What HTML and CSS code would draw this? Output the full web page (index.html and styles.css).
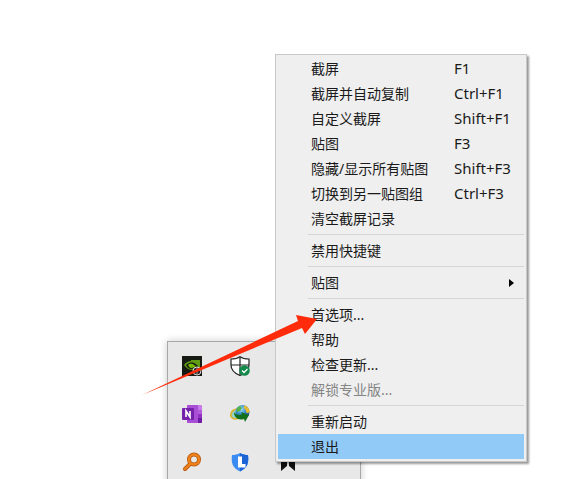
FILE: index.html
```html
<!DOCTYPE html>
<html lang="zh-CN">
<head>
    <meta charset="UTF-8">
    <meta name="viewport" content="width=device-width, initial-scale=1.0">
    <title>托盘菜单</title>
    <link rel="stylesheet" href="styles.css">
</head>
<body>
    <div class="desktop">
        <!-- tray icons -->
        <div class="tray">
            <button class="tray-btn" aria-label="NVIDIA">
                <svg width="20" height="20" viewBox="0 0 20 20">
                    <rect width="20" height="20" fill="#161a12"/>
                    <path d="M2 9C4 6 7 5 9 5V4h9v10h-7c-4 0-7-2-9-5z" fill="#5f9c12"/>
                    <path d="M4 9c2-2 5-3 8-2 2 1 3 2 4 3-2 2-4 3-7 3-2 0-4-2-5-4z" fill="#161a12"/>
                    <path d="M6 9c1-1 4-2 6 0l2 1c-1 1-3 2-5 2-1 0-2-1-3-3z" fill="#76b900"/>
                    <circle cx="15" cy="15" r="4" fill="#222" stroke="#ddd"/>
                    <path d="M15 12.500v3M15 16.500v1" stroke="#fff" stroke-width="1.200"/>
                </svg>
            </button>
            <button class="tray-btn" aria-label="安全中心">
                <svg width="20" height="20" viewBox="0 0 20 20">
                    <path d="M10 .7C7.500 2.500 4.500 3 1 3v6c0 5 4 8.500 9 10.500 5-2 9-5.500 9-10.500V3c-3.500 0-6.500-.5-9-2.300z" fill="#fff" stroke="#222" stroke-width="1.200"/>
                    <path d="M10 1v18M1 9h18" stroke="#222" stroke-width="1.200"/>
                    <circle cx="14.500" cy="14.500" r="5.300" fill="#13894b"/>
                    <path d="M12 14.500l2 2 3.500-3.500" fill="none" stroke="#fff" stroke-width="1.300"/>
                </svg>
            </button>
            <span></span>
            <button class="tray-btn" aria-label="OneNote">
                <svg width="20" height="20" viewBox="0 0 20 20">
                    <rect x="5" y="1" width="15" height="18" rx="1" fill="#c87be8"/>
                    <rect x="5" y="1" width="11" height="18" rx="1" fill="#a94fd6"/>
                    <path d="M16 6h4v4h-4z" fill="#b25bdb"/>
                    <path d="M16 10h4v4h-4z" fill="#9132c2"/>
                    <path d="M16 14h4v4a1 1 0 0 1-1 1h-3z" fill="#6c1ca2"/>
                    <rect y="4" width="12" height="12" rx="1" fill="#7522ab"/>
                    <path d="M4 13V7l4 6V7" fill="none" stroke="#fff" stroke-width="1.600"/>
                </svg>
            </button>
            <button class="tray-btn" aria-label="下载器">
                <svg width="20" height="20" viewBox="0 0 20 20">
                    <defs>
                        <radialGradient id="globe" cx="40%" cy="30%" r="70%">
                            <stop offset="0" stop-color="#a9e0f5"/>
                            <stop offset=".5" stop-color="#368cc9"/>
                            <stop offset="1" stop-color="#164887"/>
                        </radialGradient>
                    </defs>
                    <ellipse cx="6" cy="10" rx="5.500" ry="4.500" transform="rotate(-40 6 10)" fill="#8ed4cb" stroke="#d9b535" stroke-width="1.800"/>
                    <circle cx="12.500" cy="8" r="7" fill="url(#globe)"/>
                    <path d="M14 1.500c3.500.5 5.500 3.500 5.500 6.500-1.500 2-3.500 1-3.500-1s-3-2.500-2-5.500z" fill="#e6bd31"/>
                    <path d="M7 4l3-2 2 2-2 3-3 1z" fill="#55b542"/>
                    <path d="M4 8c2 3 5 4 8 2l-1-2 8 3-4 7-1-3C8 17 4 13 4 8z" fill="#126f1c"/>
                </svg>
            </button>
            <span></span>
            <button class="tray-btn" aria-label="搜索">
                <svg width="20" height="20" viewBox="0 0 20 20">
                    <path d="M8.500 11.500L3 17" stroke="#b8560a" stroke-width="4" stroke-linecap="round"/>
                    <circle cx="12" cy="7.500" r="5" fill="#e8e8e8" stroke="#b8560a" stroke-width="4"/>
                    <circle cx="12" cy="7.500" r="5" fill="none" stroke="#ee821d" stroke-width="2.400"/>
                    <path d="M8.500 11.500L3 17" stroke="#ee821d" stroke-width="2.400" stroke-linecap="round"/>
                </svg>
            </button>
            <button class="tray-btn" aria-label="电脑管家">
                <svg width="20" height="20" viewBox="0 0 20 20">
                    <path d="M10 1C7.500 2.500 4.500 3 2 3c-1 8 .5 13 8 16.500C17.500 16 19 11 18 3c-2.500 0-5.500-.5-8-2z" fill="#3b8bf2"/>
                    <path d="M10 1c2.500 1.500 5.500 2 8 2 1 8-.5 13-8 16.500z" fill="#1c63d6"/>
                    <path d="M8 4.500h4V12h3.500v3.500H8z" fill="#fff"/>
                </svg>
            </button>
            <button class="tray-btn" aria-label="书签">
                <svg width="20" height="20" viewBox="0 0 20 20">
                    <path d="M3 0h6v14l-6 5zM11 0h6v19l-6-5z" fill="#111"/>
                </svg>
            </button>
        </div>

        <!-- context menu -->
        <div class="menu">
            <button class="item"><span>截屏</span><span class="key">F1</span></button>
            <button class="item"><span>截屏并自动复制</span><span class="key">Ctrl+F1</span></button>
            <button class="item"><span>自定义截屏</span><span class="key">Shift+F1</span></button>
            <button class="item"><span>贴图</span><span class="key">F3</span></button>
            <button class="item"><span>隐藏/显示所有贴图</span><span class="key">Shift+F3</span></button>
            <button class="item"><span>切换到另一贴图组</span><span class="key">Ctrl+F3</span></button>
            <button class="item"><span>清空截屏记录</span></button>
            <hr class="line">
            <button class="item"><span>禁用快捷键</span></button>
            <hr class="line">
            <button class="item"><span>贴图</span>
                <svg class="more" width="5" height="8" viewBox="0 0 5 8"><path d="M0 0l5 4-5 4z" fill="#000"/></svg>
            </button>
            <hr class="line">
            <button class="item"><span>首选项...</span></button>
            <button class="item"><span>帮助</span></button>
            <button class="item"><span>检查更新...</span></button>
            <button class="item" disabled><span>解锁专业版...</span></button>
            <hr class="line">
            <button class="item"><span>重新启动</span></button>
            <button class="item active"><span>退出</span></button>
        </div>

        <!-- red arrow over both windows -->
        <svg class="arrow" width="176" height="82" viewBox="0 0 176 82">
            <path d="M0 81L156 7 154 1 175 5 163 20 160 14z" fill="#ff2b0a"/>
        </svg>
    </div>
</body>
</html>
```
FILE: styles.css
```css
*{
    margin: 0;
    padding: 0;
    box-sizing: border-box;
}
body,html{
    height: 100%;
}
body{
    background-color: white;
    font-family: "Noto Sans", "Noto Sans CJK SC", sans-serif;
}
button{
    border: none;
    background: none;
    font-family: inherit;
}
.desktop{
    position: relative;
    height: 100%;
    overflow: hidden;
}

/* tray */
.tray{
    position: absolute;
    left: 167px;
    top: 341px;
    display: grid;
    grid-template-columns: repeat(3, 48px);
    grid-auto-rows: 48px;
    padding-right: 48px;
    border: 1px solid #a8a8a8;
    background-color: #e8e8e8;
    box-shadow: 0 0 8px rgba(0, 0, 0, 0.2);
}
.tray-btn{
    display: flex;
    align-items: center;
    justify-content: center;
}

/* menu */
.menu{
    position: absolute;
    left: 275px;
    top: 54px;
    padding: 1px 2px 2px;
    border: 1px solid #c8c8c8;
    background-color: #efefef;
    box-shadow: 2px 2px 2px rgba(0, 0, 0, 0.4);
}
.item{
    display: grid;
    grid-template-columns: 143px 70px;
    align-items: center;
    width: 100%;
    height: 25px;
    padding-left: 33px;
    font-size: 14px;
    line-height: 25px;
    color: #1a1a1a;
    text-align: left;
    white-space: nowrap;
}
.item:hover,
.item.active{
    background-color: #91c9f7;
}
.item:disabled{
    color: #858585;
    background: none;
}
.key{
    font-size: 15px;
}
.more{
    justify-self: end;
    margin-right: 10px;
}
.line{
    height: 1px;
    margin: 3px 0 3px 30px;
    border: none;
    background-color: #d5d5d5;
}

/* arrow */
.arrow{
    position: absolute;
    left: 142px;
    top: 314px;
}
```
